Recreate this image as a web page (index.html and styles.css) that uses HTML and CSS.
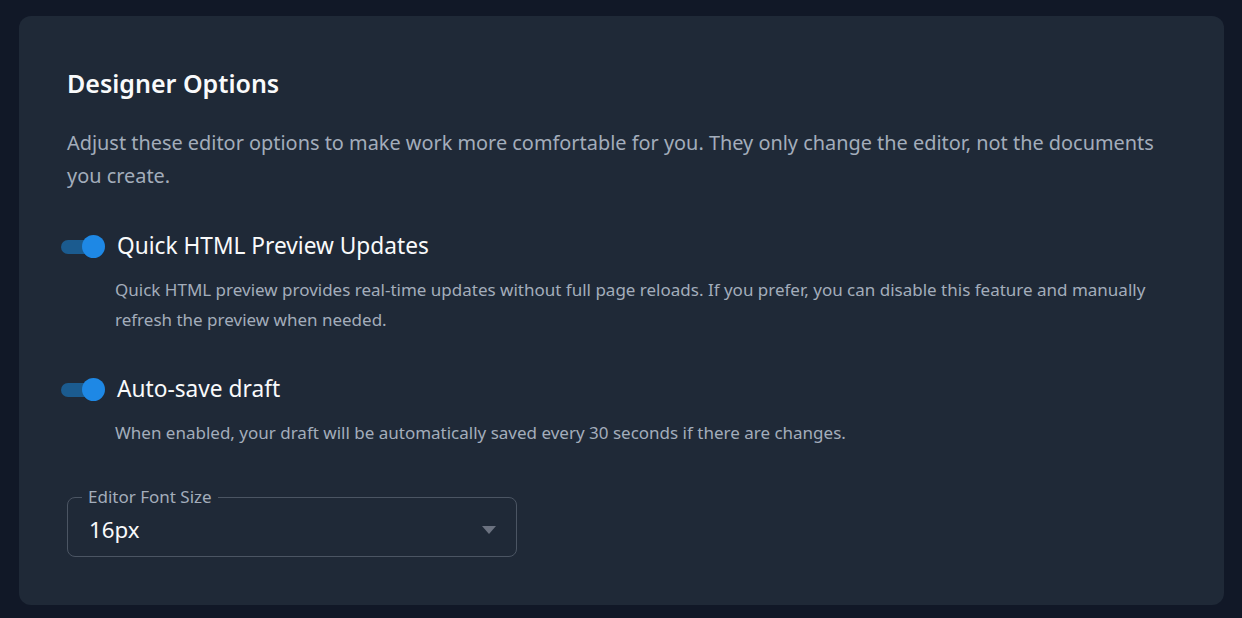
FILE: index.html
```html
<!DOCTYPE html>
<html lang="en">
<head>
  <meta charset="UTF-8">
  <meta name="viewport" content="width=device-width, initial-scale=1.0">
  <title>Designer Options</title>
  <link rel="stylesheet" href="styles.css">
</head>
<body>
  <div class="card">
    <h2>Designer Options</h2>
    <p class="intro">Adjust these editor options to make work more comfortable for you. They only change the editor, not the documents you create.</p>

    <div class="option">
      <label class="option-head">
        <span class="switch on"><span class="track"></span><span class="thumb"></span></span>
        <span class="option-label">Quick HTML Preview Updates</span>
      </label>
      <p class="option-desc">Quick HTML preview provides real-time updates without full page reloads. If you prefer, you can disable this feature and manually refresh the preview when needed.</p>
    </div>

    <div class="option">
      <label class="option-head">
        <span class="switch on"><span class="track"></span><span class="thumb"></span></span>
        <span class="option-label">Auto-save draft</span>
      </label>
      <p class="option-desc">When enabled, your draft will be automatically saved every 30 seconds if there are changes.</p>
    </div>

    <fieldset class="select">
      <legend>Editor Font Size</legend>
      <div class="select-value">
        <span>16px</span>
        <span class="arrow"></span>
      </div>
    </fieldset>
  </div>
</body>
</html>
```

FILE: styles.css
```css
body {
  margin: 0;
  padding: 16px 18px 13px 19px;
  background-color: #111827;
  font-family: "Noto Sans", "Open Sans", sans-serif;
  color: #f9fafb;
}
.card {
  background-color: #1f2937;
  border-radius: 12px;
  padding: 51px 48px 48px;
}
h2 {
  margin: 0;
  font-size: 25px;
  line-height: 32px;
  font-weight: 600;
}
.intro {
  margin: 27px 0 0;
  font-size: 19.9px;
  line-height: 33px;
  color: #a3adbb;
}
.option {
  margin-top: 38px;
}
.option-head {
  display: flex;
  align-items: center;
  gap: 12px;
  margin-left: -6px;
  cursor: pointer;
}
.switch {
  position: relative;
  width: 44px;
  height: 24px;
  flex-shrink: 0;
}
.track {
  position: absolute;
  left: 0;
  top: 6px;
  width: 38px;
  height: 14px;
  border-radius: 7px;
  background-color: #1b5b8f;
}
.thumb {
  position: absolute;
  right: 0;
  top: 1px;
  width: 23px;
  height: 23px;
  border-radius: 50%;
  background-color: #1e88e5;
}
.option-label {
  font-size: 22.7px;
  line-height: 32px;
}
.option-desc {
  margin: 13px 0 0 48px;
  font-size: 17px;
  line-height: 30px;
  color: #a3adbb;
}
.select {
  margin: 40px 0 0;
  width: 450px;
  box-sizing: border-box;
  height: 69px;
  padding: 0 20px 0 21px;
  border: 1px solid #4b5563;
  border-radius: 8px;
}
.select legend {
  margin-left: -7px;
  padding: 0 6px;
  font-size: 17px;
  line-height: 18px;
  color: #a3adbb;
}
.select-value {
  display: flex;
  align-items: center;
  justify-content: space-between;
  font-size: 22.3px;
  line-height: 32px;
  margin-top: 8px;
}
.arrow {
  width: 0;
  height: 0;
  border-left: 7.5px solid transparent;
  border-right: 7.5px solid transparent;
  border-top: 8px solid #6b7280;
}
```
